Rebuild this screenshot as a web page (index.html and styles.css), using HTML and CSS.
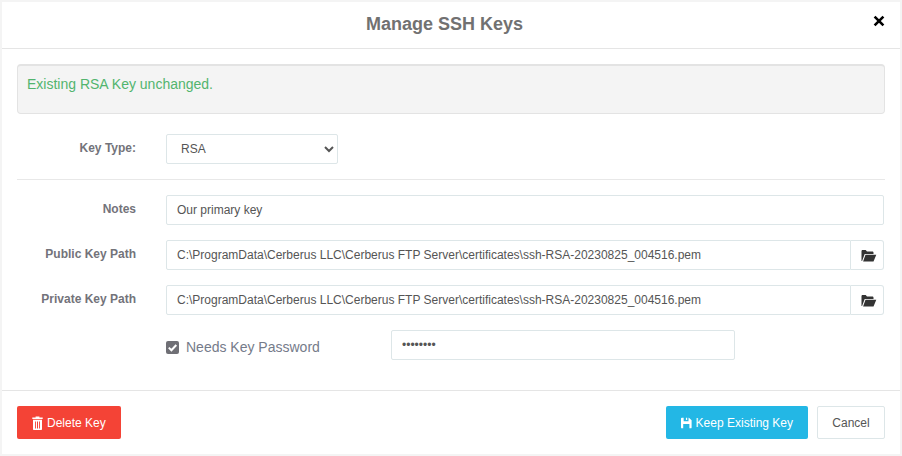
FILE: index.html
```html
<!DOCTYPE html>
<html lang="en">
<head>
<meta charset="utf-8">
<title>Manage SSH Keys</title>
<link rel="stylesheet" href="styles.css">
</head>
<body>
<div class="modal">
  <header class="modal-header">
    <h1 class="modal-title">Manage SSH Keys</h1>
    <button class="close" type="button" aria-label="Close">
      <svg viewBox="0 0 12 12" width="12" height="12"><path d="M1.6 1.6l8.8 8.8M10.4 1.6l-8.8 8.8" stroke="#000" stroke-width="2.6" fill="none"/></svg>
    </button>
  </header>
  <main class="modal-body">
    <div class="well">Existing RSA Key unchanged.</div>
    <div class="row row-type">
      <label class="label">Key Type:</label>
      <select class="control select"><option>RSA</option></select>
    </div>
    <hr class="divider">
    <div class="row">
      <label class="label">Notes</label>
      <input class="control grow" type="text" value="Our primary key">
    </div>
    <div class="row">
      <label class="label">Public Key Path</label>
      <div class="group">
        <input class="control grow" type="text" value="C:\ProgramData\Cerberus LLC\Cerberus FTP Server\certificates\ssh-RSA-20230825_004516.pem">
        <button class="browse" type="button" aria-label="Browse">
          <svg viewBox="0 0 16 13" width="17" height="13"><path d="M1 12V2.2C1 1.5 1.5 1 2.2 1h3l1.3 1.4h5.3c.7 0 1.2.5 1.2 1.2V5H4.2L1.6 12z M2.6 12.6 5 5.8h10.8L13 12.6z" fill="#333"/></svg>
        </button>
      </div>
    </div>
    <div class="row">
      <label class="label">Private Key Path</label>
      <div class="group">
        <input class="control grow" type="text" value="C:\ProgramData\Cerberus LLC\Cerberus FTP Server\certificates\ssh-RSA-20230825_004516.pem">
        <button class="browse" type="button" aria-label="Browse">
          <svg viewBox="0 0 16 13" width="17" height="13"><path d="M1 12V2.2C1 1.5 1.5 1 2.2 1h3l1.3 1.4h5.3c.7 0 1.2.5 1.2 1.2V5H4.2L1.6 12z M2.6 12.6 5 5.8h10.8L13 12.6z" fill="#333"/></svg>
        </button>
      </div>
    </div>
    <div class="row row-check">
      <label class="check">
        <span class="box"><svg viewBox="0 0 13 13" width="13" height="13"><path d="M2.8 6.6l2.6 2.6 4.9-5.2" stroke="#fff" stroke-width="2" fill="none"/></svg></span>
        Needs Key Password
      </label>
      <input class="control password" type="password" value="12345678">
    </div>
  </main>
  <footer class="modal-footer">
    <button class="btn btn-danger" type="button">
      <svg viewBox="0 0 11 14" width="11" height="14"><path d="M3.6 1.6V.6h3.8v1h3.3v1.4H.3V1.6zM1 3.8h9v9.2c0 .6-.4 1-1 1H2c-.6 0-1-.4-1-1zM3 5.4v7h.9v-7zM5 5.4v7h1v-7zM7.1 5.4v7H8v-7z" fill="#fff" fill-rule="evenodd"/></svg>
      Delete Key
    </button>
    <div class="spacer"></div>
    <button class="btn btn-info" type="button">
      <svg viewBox="0 0 12 12" width="12" height="12"><path d="M0 1c0-.6.4-1 1-1h8l3 3v8c0 .6-.4 1-1 1H1c-.6 0-1-.4-1-1zM3 0v4h5.5V0H7v2.6H5.6V0zM2.5 7v5h7V7z" fill="#fff" fill-rule="evenodd"/></svg>
      Keep Existing Key
    </button>
    <button class="btn btn-default" type="button">Cancel</button>
  </footer>
</div>
</body>
</html>
```
FILE: styles.css
```css
* { box-sizing: border-box; }
html, body { margin: 0; height: 100%; }
body {
  background: #f4f4f4;
  padding: 2px;
  font-family: "Liberation Sans", Arial, sans-serif;
  font-size: 12px;
  color: #555;
  overflow: hidden;
}
.modal {
  width: 898px;
  height: 452px;
  background: #fff;
  display: flex;
  flex-direction: column;
}
.modal-header {
  height: 47px;
  flex: none;
  border-bottom: 1px solid #e5e5e5;
  display: flex;
  align-items: center;
  justify-content: center;
  padding-right: 13px;
  position: relative;
}
.modal-title {
  margin: 0 0 1px;
  font-size: 18px;
  font-weight: 700;
  color: #717171;
}
.close {
  position: absolute;
  right: 15px;
  top: 13px;
  width: 12px;
  height: 12px;
  padding: 0;
  border: 0;
  background: none;
  display: flex;
}
.modal-body {
  flex: 1;
  padding: 15px 15px 0;
}
.well {
  height: 50px;
  background: #f4f4f4;
  border: 1px solid #e3e3e3;
  border-top-width: 2px;
  border-radius: 4px;
  padding: 9px 9px;
  font-size: 14px;
  line-height: 18px;
  color: #52b46e;
  margin-bottom: 20px;
}
.row {
  display: flex;
  align-items: flex-start;
  height: 30px;
  margin-bottom: 15px;
  padding-right: 1px;
}
.row-type { margin-bottom: 0; }
.label {
  width: 119px;
  margin-right: 30px;
  text-align: right;
  font-weight: 700;
  color: #73737a;
  line-height: 16px;
  padding-top: 6px;
  flex: none;
}
.control {
  height: 30px;
  border: 1px solid #dde6e8;
  border-radius: 2px;
  background: #fff;
  padding: 0 10px;
  font: 12px "Liberation Sans", Arial, sans-serif;
  color: #555;
  outline: none;
}
.grow { flex: 1; min-width: 0; width: 100%; }
.select { width: 172px; padding-left: 10px; }
.divider {
  border: 0;
  border-top: 1px solid #e8e8e8;
  margin: 15px 0;
}
.group { flex: 1; display: flex; min-width: 0; }
.group .control { border-radius: 2px 0 0 2px; }
.browse {
  width: 33px;
  height: 30px;
  flex: none;
  padding: 0 0 0 2px;
  background: #fff;
  border: 1px solid #dde6e8;
  border-left: 0;
  border-radius: 0 3px 3px 0;
  display: flex;
  align-items: center;
  justify-content: center;
}
.row-check { padding-left: 149px; margin-bottom: 0; }
.check {
  width: 225px;
  flex: none;
  display: flex;
  align-items: center;
  gap: 7px;
  font-size: 14px;
  line-height: 16px;
  margin-top: 9px;
  color: #757b8a;
}
.box {
  width: 13px;
  height: 13px;
  background: #6f6f75;
  border-radius: 2px;
  display: flex;
}
.password { width: 344px; }
.modal-footer {
  height: 64px;
  flex: none;
  border-top: 1px solid #e5e5e5;
  padding: 15px 15px 0;
  display: flex;
  align-items: flex-start;
  gap: 9px;
}
.spacer { flex: 1; }
.btn {
  height: 33px;
  padding: 0 14px;
  border: 1px solid transparent;
  border-radius: 2px;
  font: 12px "Liberation Sans", Arial, sans-serif;
  white-space: nowrap;
  display: flex;
  align-items: center;
  gap: 4px;
}
.btn-danger { background: #f44336; color: #fff; width: 104px; }
.btn-info { background: #23b7e5; color: #fff; width: 142px; }
.btn-default { background: #fff; border-color: #dde6e8; color: #555; width: 68px; justify-content: center; padding: 0; }
```
